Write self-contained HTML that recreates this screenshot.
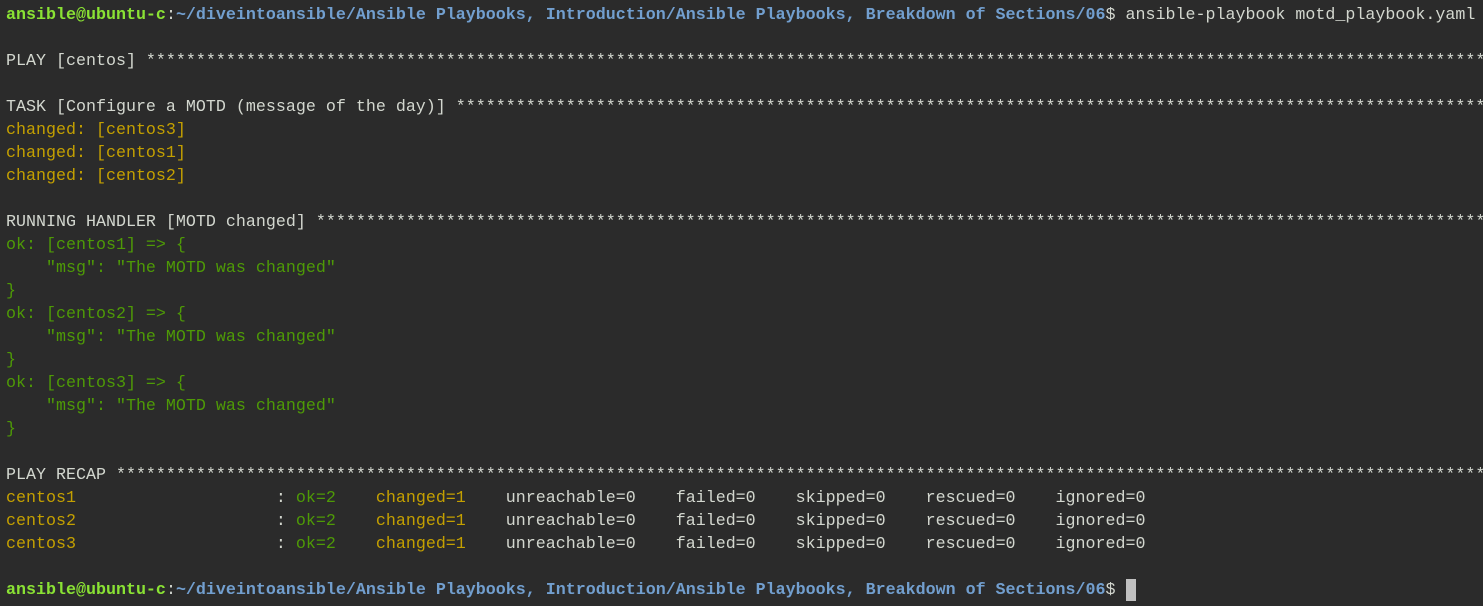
<!DOCTYPE html>
<html><head><meta charset="utf-8"><style>
html,body{margin:0;padding:0;background:#2b2b2b;width:1483px;height:606px;overflow:hidden}
pre{margin:0;padding:4px 0 0 6px;font-family:"Liberation Mono",monospace;font-size:16.67px;line-height:23px;color:#d3d7cf;white-space:pre;overflow:hidden}
.g{color:#8ae234;font-weight:bold}.b{color:#729fcf;font-weight:bold}
.y{color:#c4a000}.k{color:#4e9a06}
.cur{display:inline-block;width:10px;height:22px;background:#c0c0c0;vertical-align:top}
</style></head><body><pre><span class="g">ansible@ubuntu-c</span>:<span class="b">~/diveintoansible/Ansible Playbooks, Introduction/Ansible Playbooks, Breakdown of Sections/06</span>$ ansible-playbook motd_playbook.yaml

PLAY [centos] ***************************************************************************************************************************************

TASK [Configure a MOTD (message of the day)] ********************************************************************************************************
<span class="y">changed: [centos3]</span>
<span class="y">changed: [centos1]</span>
<span class="y">changed: [centos2]</span>

RUNNING HANDLER [MOTD changed] **********************************************************************************************************************
<span class="k">ok: [centos1] =&gt; {
    "msg": "The MOTD was changed"
}</span>
<span class="k">ok: [centos2] =&gt; {
    "msg": "The MOTD was changed"
}</span>
<span class="k">ok: [centos3] =&gt; {
    "msg": "The MOTD was changed"
}</span>

PLAY RECAP ******************************************************************************************************************************************
<span class="y">centos1</span>                    : <span class="k">ok=2   </span> <span class="y">changed=1   </span> unreachable=0    failed=0    skipped=0    rescued=0    ignored=0
<span class="y">centos2</span>                    : <span class="k">ok=2   </span> <span class="y">changed=1   </span> unreachable=0    failed=0    skipped=0    rescued=0    ignored=0
<span class="y">centos3</span>                    : <span class="k">ok=2   </span> <span class="y">changed=1   </span> unreachable=0    failed=0    skipped=0    rescued=0    ignored=0

<span class="g">ansible@ubuntu-c</span>:<span class="b">~/diveintoansible/Ansible Playbooks, Introduction/Ansible Playbooks, Breakdown of Sections/06</span>$ <span class="cur"></span></pre></body></html>
